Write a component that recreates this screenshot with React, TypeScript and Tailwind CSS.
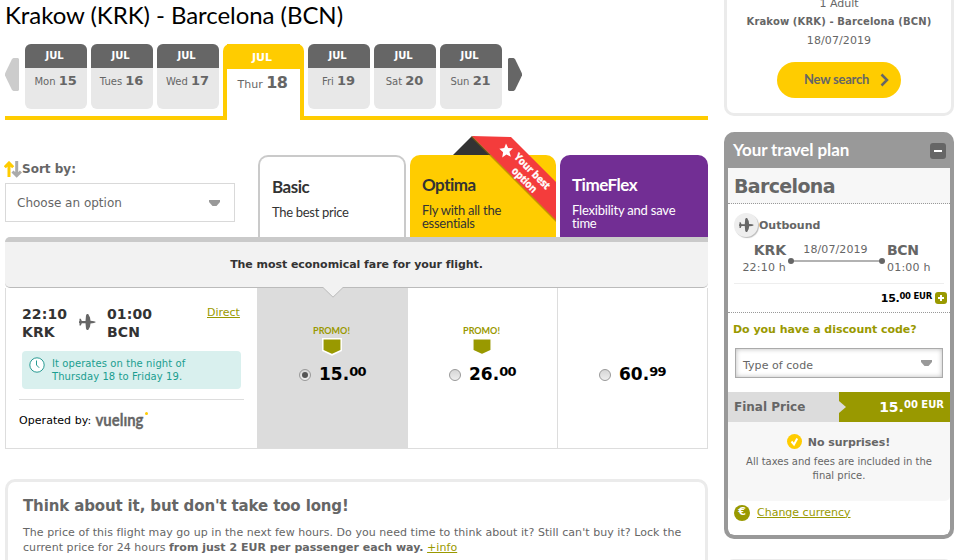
import type { ReactNode } from 'react'

interface Day {
  name: string
  date: number
}

const daysBefore: Day[] = [
  { name: 'Mon', date: 15 },
  { name: 'Tues', date: 16 },
  { name: 'Wed', date: 17 },
]

const daysAfter: Day[] = [
  { name: 'Fri', date: 19 },
  { name: 'Sat', date: 20 },
  { name: 'Sun', date: 21 },
]

function DayTab({ name, date }: Day) {
  return (
    <div className="h-[65px] w-[62px] shrink-0 overflow-hidden rounded-[6px] bg-[#e8e8e8] pr-px text-center text-[#666]">
      <div className="-mr-px h-6 bg-[#666] pr-[3px] text-[10px] leading-[23px] font-bold tracking-[-0.1px] text-white">JUL</div>
      <div className="h-6 text-[10px] leading-[26px] whitespace-nowrap">
        {name} <b className="text-[13px] tracking-[-0.1px]">{date}</b>
      </div>
    </div>
  )
}

function PlaneIcon({ className = '' }: { className?: string }) {
  return (
    <svg viewBox="0 0 17 16" className={className} fill="#666">
      <path d="M.5 4.800h1.300L2.800 7h3.700L7 1.500 7.800 0h1.400L11 3.500l.5 3.300 3.500.4 2 .9-2 .9-3.500.4-.5 3.300L9.200 16H7.800L7 14.500 6.500 9.200H2.800l-1 2.200H.5V9H0V7.200h.5z" />
    </svg>
  )
}

function CaretIcon({ className = '' }: { className?: string }) {
  return (
    <svg viewBox="0 0 11 6" className={className} fill="#999">
      <path d="M0 0h11v2L7.500 6h-4L0 2z" />
    </svg>
  )
}

function Radio({ checked = false }: { checked?: boolean }) {
  return (
    <span className="flex h-3 w-3 items-center justify-center rounded-full border border-[#999] bg-gradient-to-b from-[#d6d6d6] to-[#eee]">
      {checked && <span className="h-1.5 w-1.5 rounded-full bg-[#555]" />}
    </span>
  )
}

function FareCell({ whole, cents, promo = false, selected = false }: { whole: string; cents: string; promo?: boolean; selected?: boolean }) {
  return (
    <div className={`flex shrink-0 flex-col ${selected ? 'w-[151px] bg-[#dcdcdc]' : 'w-[150px] border-r border-[#ddd]'}`}>
      <div className="flex h-[76px] flex-col items-center pt-[37px] pr-[2px]">
        {promo && (
          <>
            <span className="font-['Lato'] text-[9px] leading-[12px] font-bold text-[#990]">PROMO!</span>
            <svg viewBox="0 0 22 19" className="h-[19px] w-[22px] shrink-0">
              <path d="M1.800 1.800h18.400v11.700L11 17.800l-9.200-4.300z" fill="#990" stroke="#fff" strokeWidth="1.500" />
            </svg>
          </>
        )}
      </div>
      <div className={`flex items-center ${selected ? 'pl-[42px]' : 'pl-[41px]'}`}>
        <Radio checked={selected} />
        <div className="ml-[8px] flex h-[22px] items-start font-bold text-black">
          <span className="text-[17px] leading-[20px]">{whole}.</span>
          <span className="text-[13px] leading-[16px] tracking-[-0.8px]">{cents}</span>
        </div>
      </div>
    </div>
  )
}

function FareTab({ title, className, children }: { title: string; className: string; children: ReactNode }) {
  return (
    <div className={`relative h-[82px] rounded-t-[10px] font-['Lato'] ${className}`}>
      <h3 className="text-[17px] leading-[20px] font-bold tracking-[-0.5px]">{title}</h3>
      {children}
    </div>
  )
}

function BestOptionRibbon() {
  return (
    <svg viewBox="0 0 104 90" className="absolute -top-5 left-[42px] h-[90px] w-[104px]">
      <path d="M1 20L20 1l19 19z" fill="#333" />
      <path d="M19 2l85 85v-3L22 1z" fill="#9a6b00" opacity=".6" />
      <path d="M20 1l39 1 45 45v38z" fill="#f43c3c" />
      <path d="M54 8.600l2.100 4.500 4.900.1-3.600 3.500 1.500 5-4.500-2.300-4.200 3 .9-5.200-3.800-3.500 5-.6z" fill="#fff" />
      <g fill="#fff" stroke="#fff" strokeWidth=".3" fontFamily="Open Sans, sans-serif" fontWeight="700" fontSize="10.500">
        <text transform="translate(61.500 22.500) rotate(45)" textLength="46" lengthAdjust="spacingAndGlyphs">Your best</text>
        <text transform="translate(59 36.500) rotate(45)" textLength="31" lengthAdjust="spacingAndGlyphs">option</text>
      </g>
    </svg>
  )
}

function DaySelector() {
  return (
    <div className="flex h-[76px]">
      <div className="flex w-[218px] gap-1 border-b-4 border-[#fc0]">
        <svg viewBox="0 0 14 33" className="mt-[14px] mr-[2px] h-[33px] w-[14px] shrink-0" fill="#ccc">
          <path d="M8.500 0H13l1 1v31l-1 1H8.500L7 32 0 17.500v-2L7 1z" />
        </svg>
        {daysBefore.map((day) => (
          <DayTab key={day.name} {...day} />
        ))}
      </div>
      <div className="w-[81px] rounded-t-[7px] border-x-4 border-[#fc0] text-center text-[#666]">
        <div className="h-[25px] bg-[#fc0] pr-[3px] text-[11px] leading-[28px] font-bold text-white">JUL</div>
        <div className="pr-[2px] text-[11px] leading-[28px]">
          Thur <b className="text-[16px] tracking-[-0.5px]">18</b>
        </div>
      </div>
      <div className="flex flex-1 gap-1 border-b-4 border-[#fc0] pl-1">
        {daysAfter.map((day) => (
          <DayTab key={day.name} {...day} />
        ))}
        <svg viewBox="0 0 14 33" className="mt-[14px] ml-[2px] h-[33px] w-[14px] shrink-0" fill="#666">
          <path d="M1 0h4.500L7 1l7 14.500v2L7 32l-1.500 1H1l-1-1V1z" />
        </svg>
      </div>
    </div>
  )
}

function SortBy() {
  return (
    <div className="w-[253px] pt-[6px] text-[#666]">
      <div className="-ml-px flex h-[22px] items-start">
        <svg viewBox="0 0 18 17" className="h-[17px] w-[18px] shrink-0" fill="none" strokeWidth="3">
          <path d="M5 16V3M.8 6.200L5 2l4.200 4.200" stroke="#fc0" />
          <path d="M12.700 0v13M8.500 10.500l4.200 4.200 4.200-4.200" stroke="#aaa" />
        </svg>
        <b className="text-[12px] leading-[17px]">Sort by:</b>
      </div>
      <div className="flex h-[39px] w-[230px] items-center justify-between border border-[#d9d9d9] pr-[14px] pl-[11px] text-[12px]">
        Choose an option
        <CaretIcon className="h-[6px] w-[11px]" />
      </div>
    </div>
  )
}

function FlightRow() {
  return (
    <div className="flex h-[161px] border-b border-l border-[#ddd]">
      <div className="w-[251px] shrink-0 pt-[17px]">
        <div className="flex pl-4 text-[14px] leading-[18px] font-bold text-[#333]">
          <div className="w-[57px] tracking-[0.1px]">22:10<br />KRK</div>
          <PlaneIcon className="mt-[9px] h-4 w-[17px]" />
          <div className="ml-[11px] w-[100px] tracking-[0.1px]">01:00<br />BCN</div>
          <a className="text-[11px] leading-[16px] font-normal text-[#990] underline">Direct</a>
        </div>
        <div className="mt-[10px] ml-4 flex h-[38px] w-[219px] rounded bg-[#d9f0ee] pt-[6px] pl-[7px] text-[10px] leading-[13px] text-[#1a9e90]">
          <svg viewBox="0 0 16 16" className="h-4 w-4 shrink-0">
            <circle cx="8" cy="8" r="7.200" fill="#fff" stroke="#2a9b93" />
            <path d="M7.500 3.500V8l2.700 2.800" fill="none" stroke="#2a9b93" />
          </svg>
          <p className="ml-[7px] tracking-[0.08px]">It operates on the night of<br />Thursday 18 to Friday 19.</p>
        </div>
        <div className="mt-[10px] ml-[13px] flex h-10 w-[225px] items-start border-t border-[#ddd] pt-[11px] text-[11px] leading-[20px] text-black">
          <span className="tracking-[0.05px]">Operated by:</span>
          <svg viewBox="0 0 54 24" className="ml-1 h-6 w-[54px]">
            <text x="0.500" y="14.500" fontFamily="Lato, sans-serif" fontWeight="700" fontSize="17.500" fill="#666" stroke="#666" strokeWidth=".3" textLength="48" lengthAdjust="spacingAndGlyphs">vuelıng</text>
            <circle cx="51.500" cy="2.500" r="1.500" fill="#fc0" />
          </svg>
        </div>
      </div>
      <FareCell whole="15" cents="00" promo selected />
      <FareCell whole="26" cents="00" promo />
      <FareCell whole="60" cents="99" />
    </div>
  )
}

function FareTable() {
  return (
    <div>
      <div className="mt-[35px] flex h-[82px]">
        <SortBy />
        <FareTab title="Basic" className="w-[148px] border-2 border-b-0 border-[#cacaca] pt-[20px] pl-3 text-[#333]">
          <p className="mt-[8px] text-[13px] leading-[14px] tracking-[-0.3px]">The best price</p>
        </FareTab>
        <FareTab title="Optima" className="ml-1 w-[146px] bg-[#fc0] pt-[20px] pl-3 text-[#333]">
          <p className="mt-[9px] text-[13px] leading-[13px] tracking-[-0.25px]">Fly with all the<br />essentials</p>
          <BestOptionRibbon />
        </FareTab>
        <FareTab title="TimeFlex" className="ml-1 w-[148px] bg-[#722e94] pt-[20px] pl-3 text-white">
          <p className="mt-[9px] text-[13px] leading-[13px] tracking-[-0.2px]">Flexibility and save<br />time</p>
        </FareTab>
      </div>
      <div className="relative h-[51px] rounded-tl-[5px] rounded-b-[5px] border-t-[5px] border-b border-t-[#cacaca] border-b-[#bbb] bg-[#f2f2f2] text-center text-[11px] leading-[46px] font-bold tracking-[-0.05px] text-[#333]">
        The most economical fare for your flight.
        <svg viewBox="0 0 20 12" className="absolute top-[45px] left-[318px] h-3 w-5">
          <path d="M0 0h20v.5L10 10 0 .5z" fill="#f2f2f2" />
          <path d="M0 .5L10 10.200 20 .5" fill="none" stroke="#bbb" />
        </svg>
      </div>
      <FlightRow />
    </div>
  )
}

function PriceHold() {
  return (
    <div className="mt-[30px] h-[120px] rounded-[10px] border-[3px] border-[#ebebeb] pt-[14px] pl-[15px] text-[#666]">
      <h2 className="text-[15px] leading-[20px] font-bold tracking-[-0.13px]">Think about it, but don't take too long!</h2>
      <p className="mt-[9px] text-[11px] leading-[15px] tracking-[0.055px] whitespace-nowrap">
        The price of this flight may go up in the next few hours. Do you need time to think about it? Still can't buy it? Lock the
        <br />
        current price for 24 hours <b className="tracking-[0.01px]">from just 2 EUR per passenger each way.</b> <a className="text-[#990] underline">+info</a>
      </p>
    </div>
  )
}

function SearchSummary() {
  return (
    <div className="flex h-[116px] flex-col items-center rounded-b-[10px] border-[3px] border-t-0 border-[#ebebeb] text-[11px] text-[#666]">
      <div className="-mt-[4px] h-[16px] leading-[16px]">1 Adult</div>
      <b className="h-[19px] text-[10px] leading-[19px] tracking-[0.13px] whitespace-nowrap">Krakow (KRK) - Barcelona (BCN)</b>
      <div className="h-[19px] leading-[19px] tracking-[0.1px]">18/07/2019</div>
      <button className="mt-[12px] flex h-9 w-[124px] items-center rounded-full bg-[#fc0] pl-[27px] font-['Lato'] text-[13px] font-bold tracking-[-0.25px]">
        <span className="w-[76px] text-left">New search</span>
        <svg viewBox="0 0 9 14" className="h-[14px] w-[9px]" fill="none" stroke="#666" strokeWidth="2.500">
          <path d="M1.500 1.500L7 7l-5.500 5.500" />
        </svg>
      </button>
    </div>
  )
}

function OutboundLeg() {
  return (
    <div className="h-[109px] border-b border-dotted border-[#999] text-[#666]">
      <div className="flex items-center pt-[9px] pl-[6px]">
        <span className="flex h-6 w-6 items-center justify-center rounded-full bg-[#eee] shadow-[1px_1px_1px_#bbb]">
          <PlaneIcon className="h-[14px] w-[15px]" />
        </span>
        <b className="ml-[1px] pt-px text-[11px] leading-[21px]">Outbound</b>
      </div>
      <div className="flex pt-[5px] text-[11px] leading-[16px]">
        <div className="w-[58px] text-right">
          <b className="text-[14px] tracking-[-0.1px]">KRK</b><br /><span className="tracking-[0.2px]">22:10 h</span>
        </div>
        <div className="w-[101px] pl-[2px]">
          <div className="h-[16px] pr-[4px] text-center leading-[15px] tracking-[0.1px] whitespace-nowrap">18/07/2019</div>
          <svg viewBox="0 0 97 6" className="h-[6px] w-[97px]" fill="#666">
            <path d="M3 2.500h91v1H3z" />
            <circle cx="3" cy="3" r="3" />
            <circle cx="94" cy="3" r="3" />
          </svg>
        </div>
        <div>
          <b className="text-[14px] tracking-[-0.3px]">BCN</b><br /><span className="tracking-[0.2px]">01:00 h</span>
        </div>
      </div>
      <div className="mx-[6px] mt-[7px] flex justify-end border-t border-[#eee] pt-[7px] font-bold text-black">
        <span className="text-[11px] leading-[15px] tracking-[-0.3px]">15.</span>
        <span className="text-[8.5px] leading-[11px] tracking-[-0.25px]">00 EUR</span>
        <span className="mt-px -mr-[3px] ml-[3px] flex h-3 w-3 items-center justify-center rounded-[3px] bg-[#990]">
          <svg viewBox="0 0 6 6" className="h-[6px] w-[6px]" fill="#fff">
            <path d="M2 0h2v2h2v2H4v2H2V4H0V2h2z" />
          </svg>
        </span>
      </div>
    </div>
  )
}

function TravelPlan() {
  return (
    <div className="mt-4 h-[407px] overflow-hidden rounded-[10px] border-4 border-t-0 border-[#999] bg-[#999] text-[#666]">
      <div className="flex h-9 items-center justify-between pr-1 pl-[5px]">
        <h2 className="font-['Lato'] text-[17px] font-bold tracking-[-0.1px] text-white">Your travel plan</h2>
        <span className="mt-[2px] flex h-4 w-4 items-center justify-center rounded-[3px] bg-[#666]">
          <span className="h-[2px] w-2 bg-white" />
        </span>
      </div>
      <div className="h-[367px] rounded-b-[6px] bg-white">
        <h3 className="h-9 border-b border-dotted border-[#999] bg-[#f7f7f7] pl-[6px] text-[19px] leading-[36px] font-bold tracking-[-0.65px]">Barcelona</h3>
        <OutboundLeg />
        <div className="h-[79px] pt-[9px] pl-[5px]">
          <b className="block text-[11px] leading-[16px] tracking-[-0.04px] text-[#990]">Do you have a discount code?</b>
          <div className="mt-[10px] ml-[2px] flex h-[30px] w-[208px] items-center justify-between border border-[#aaa] pr-[10px] pl-[7px] text-[11px] shadow-[inset_0_0_5px_#bbb]">
            <span className="pt-[6px] leading-[14px] tracking-[0.05px]">Type of code</span>
            <CaretIcon className="h-[6px] w-[11px]" />
          </div>
        </div>
        <div className="flex h-[30px] font-bold">
          <div className="w-[111px] bg-[#dcdcdc] pl-[6px] text-[12px] leading-[30px]">Final Price</div>
          <div className="relative flex flex-1 justify-end bg-[#990] pr-[6px] text-white">
            <svg viewBox="0 0 7 12" className="absolute top-[9px] left-0 h-3 w-[7px]" fill="#dcdcdc">
              <path d="M0 0l7 6-7 6z" />
            </svg>
            <span className="text-[14px] leading-[31px]">15.</span>
            <span className="text-[10px] leading-[26px]">00 EUR</span>
          </div>
        </div>
        <div className="h-[79px] rounded-b-[5px] bg-[#f7f7f7] pt-3 text-center">
          <div className="flex h-4 items-start justify-center gap-[6px] pr-[1px]">
            <svg viewBox="0 0 15 15" className="h-[15px] w-[15px]">
              <circle cx="7.500" cy="7.500" r="7.500" fill="#fc0" />
              <path d="M4.500 7.500L7 10.500l3.200-6" fill="none" stroke="#fff" strokeWidth="2" />
            </svg>
            <b className="text-[11px] leading-[17px] tracking-[-0.05px]">No surprises!</b>
          </div>
          <p className="mt-[5px] text-[10px] leading-[14px]">All taxes and fees are included in the<br />final price.</p>
        </div>
        <div className="flex h-[23px] items-center pl-[6px]">
          <span className="flex h-4 w-4 items-center justify-center rounded-full bg-[#990] text-[11px] font-bold text-white">€</span>
          <a className="ml-[7px] pt-px text-[11px] text-[#990] underline">Change currency</a>
        </div>
      </div>
    </div>
  )
}

export default function App() {
  return (
    <div className="flex h-[560px] w-[961px] overflow-hidden bg-white pl-[5px] font-['DejaVu_Sans',sans-serif]">
      <main className="w-[703px] shrink-0">
        <h1 className="h-11 font-['Lato'] text-[24px] leading-[29px] tracking-[-0.05px] whitespace-nowrap text-black">Krakow (KRK) - Barcelona (BCN)</h1>
        <DaySelector />
        <FareTable />
        <PriceHold />
      </main>
      <aside className="ml-4 w-[230px] shrink-0">
        <SearchSummary />
        <TravelPlan />
        <div className="mt-5 h-10 rounded-[10px] border-[3px] border-[#ebebeb]" />
      </aside>
    </div>
  )
}
